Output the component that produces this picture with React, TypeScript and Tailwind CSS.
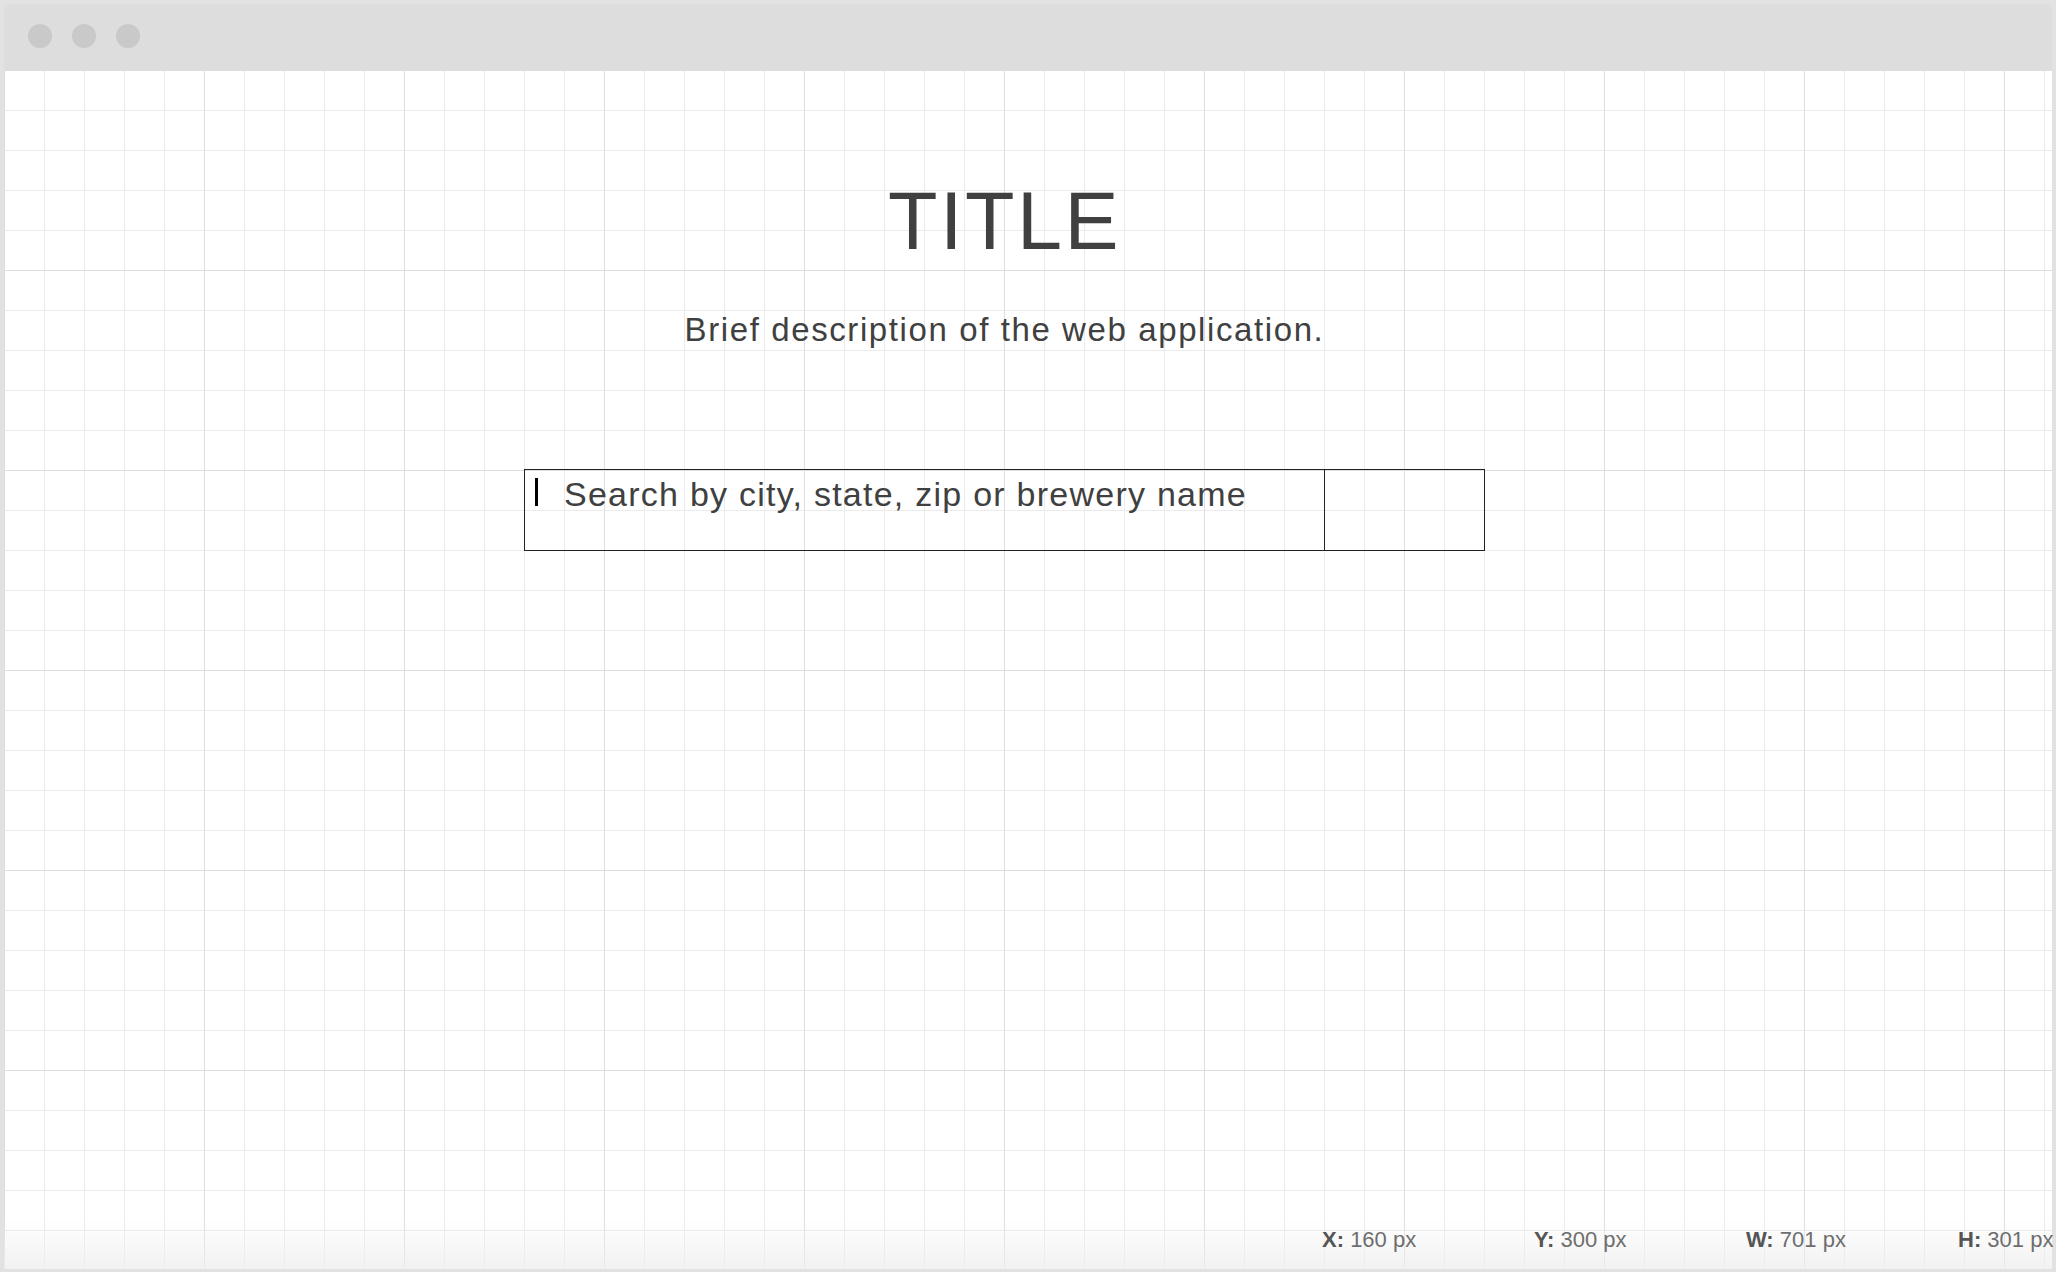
export default function App() {
  const stats = [
    { label: "X:", value: "160 px", w: "w-[212px]" },
    { label: "Y:", value: "300 px", w: "w-[212px]" },
    { label: "W:", value: "701 px", w: "w-[212px]" },
    { label: "H:", value: "301 px", w: "" },
  ];

  return (
    <div className="w-[2056px] h-[1272px] overflow-hidden bg-[#e2e2e2] pt-[4px] pl-[4px] pr-[4px] pb-[3px] flex flex-col font-['Liberation_Sans',Arial,sans-serif]">
      {/* window bar */}
      <div className="h-[66px] shrink-0 bg-[#dddddd] rounded-t-[8px] flex items-center gap-[20px] pl-[24px] pb-[2px]">
        <span className="w-6 h-6 rounded-full bg-[#c9c9c9]" />
        <span className="w-6 h-6 rounded-full bg-[#c9c9c9]" />
        <span className="w-6 h-6 rounded-full bg-[#c9c9c9]" />
      </div>

      {/* canvas with grid */}
      <div className="flex-1 flex flex-col bg-white bg-[image:linear-gradient(to_right,#dedede_1px,transparent_1px),linear-gradient(to_bottom,#dedede_1px,transparent_1px),linear-gradient(to_right,#ebebeb_1px,transparent_1px),linear-gradient(to_bottom,#ebebeb_1px,transparent_1px)] bg-[size:200px_200px,200px_200px,40px_40px,40px_40px]">
        <div className="pl-[520px] pt-[111px]">
          <div className="w-[961px] flex flex-col items-center text-[#404040]">
            <h1 className="text-[81px] leading-none tracking-[2.5px] font-normal">TITLE</h1>
            <p className="mt-[51px] text-[33px] leading-none tracking-[1.6px]">
              Brief description of the web application.
            </p>
          </div>

          <div className="mt-[123px] w-[961px] h-[82px] flex border border-[#222222]">
            <div className="w-[799px] flex items-start pl-[10px] pt-[8px]">
              <span className="w-[3px] h-[28px] bg-black" />
              <span className="ml-[26px] -mt-[1px] text-[34px] leading-none tracking-[1.25px] text-[#404040]">
                Search by city, state, zip or brewery name
              </span>
            </div>
            <div className="flex-1 border-l border-[#222222]" />
          </div>
        </div>

        {/* status bar */}
        <div className="mt-auto h-[50px] flex items-center pb-[10px] pl-[1318px] bg-linear-to-b from-white/0 to-[#eeeeee]/80 text-[22px] whitespace-nowrap">
          {stats.map((s) => (
            <div key={s.label} className={`${s.w} shrink-0`}>
              <span className="font-bold text-[#555555]">{s.label}</span>
              <span className="text-[#6e6e6e]"> {s.value}</span>
            </div>
          ))}
        </div>
      </div>
    </div>
  );
}
